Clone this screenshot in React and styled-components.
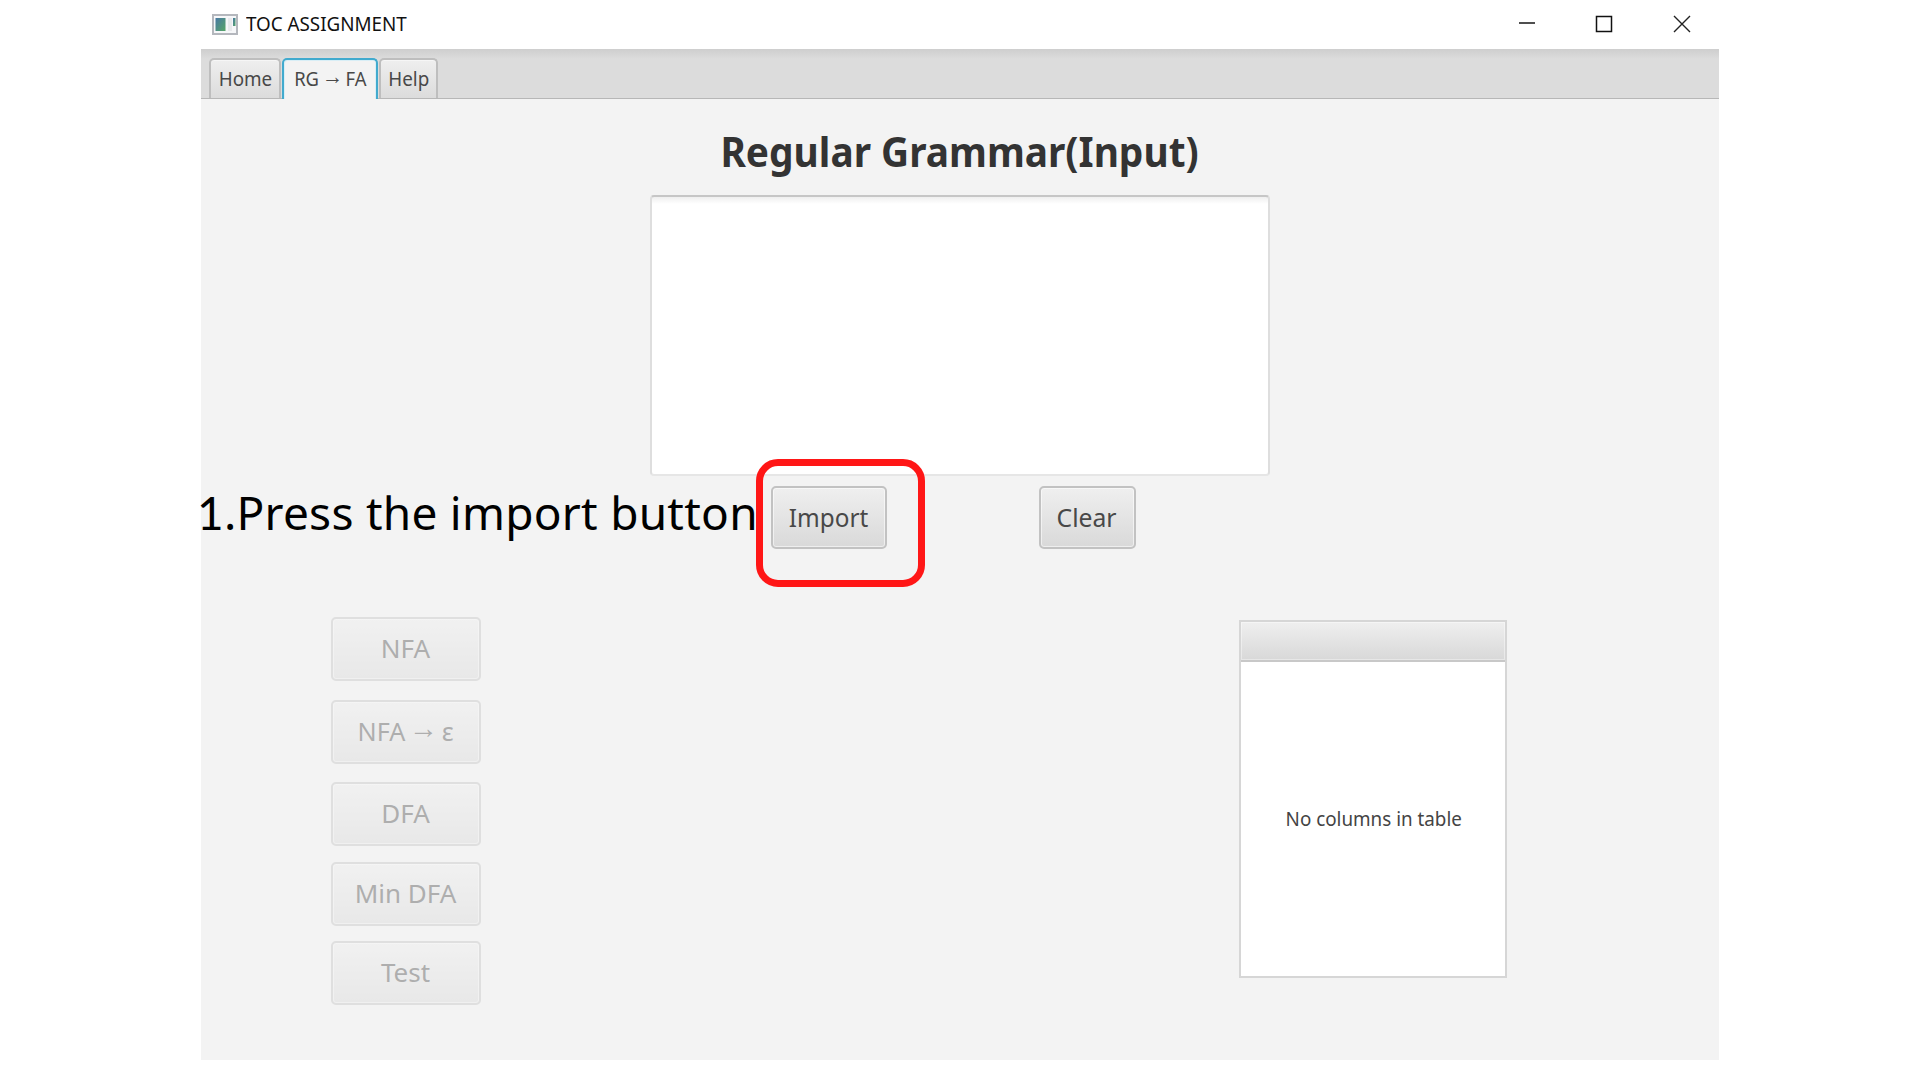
import React from 'react';
import styled, { createGlobalStyle, css } from 'styled-components';

const Global = createGlobalStyle`
  * { box-sizing: border-box; }
  body { margin: 0; background: #fff; font-family: "Noto Sans", "Open Sans", sans-serif; color: #333; overflow: hidden; }
`;

const Page = styled.div`
  width: 1920px;
  height: 1080px;
  display: flex;
  justify-content: center;
  background: #fff;
`;

const Window = styled.main`
  position: relative;
  width: 1518px;
  height: 1060px;
  display: flex;
  flex-direction: column;
  background: #f3f3f3;
`;

const Label = styled.span`
  display: inline-block;
  white-space: nowrap;
  transform: scaleX(${(p) => p.$narrow || 1});
  transform-origin: ${(p) => p.$origin || 'center'};
`;

const Arrow = styled.span`
  position: relative;
  top: -0.08em;
  margin: 0 -0.1em;
  font-family: "Liberation Sans", sans-serif;
  font-size: 1.15em;
  line-height: 0;
`;

const TitleBar = styled.header`
  height: 49px;
  display: flex;
  align-items: center;
  padding: 0 28px 1px 11px;
  background: #fff;
`;

const Title = styled.div`
  margin-left: 8px;
  flex: 1;
  color: #111;
  font-size: 20px;
  line-height: 28px;
`;

const Controls = styled.div`
  display: flex;
  gap: 60px;
`;

const TabBar = styled.nav`
  height: 50px;
  display: flex;
  align-items: flex-end;
  gap: 1px;
  padding-left: 8px;
  border-bottom: 1px solid #b7b7b7;
  background: linear-gradient(#cecece, #dcdcdc 10px);
`;

const Tab = styled.div`
  width: ${(p) => p.$w}px;
  height: 40px;
  display: flex;
  align-items: center;
  justify-content: center;
  border: 2px solid #bebebe;
  border-bottom: 0;
  border-radius: 5px 5px 0 0;
  background: linear-gradient(#efefef, #dcdcdc);
  box-shadow: inset 0 1px #f6f6f6;
  font-size: 20px;
  line-height: 28px;
  color: #484848;
  ${(p) => p.$active && css`
    height: 41px;
    margin-bottom: -1px;
    padding-bottom: 1px;
    border-color: #41aace;
    background: #f3f3f3;
    box-shadow: inset 1px 1px #d8eef6, inset -1px 0 #d8eef6;
  `}
`;

const InputArea = styled.section`
  height: 517px;
  display: flex;
  flex-direction: column;
  align-items: center;
`;

const Heading = styled.h1`
  margin: 24px 0 0;
  height: 72px;
  font-size: 41px;
  line-height: 56px;
  font-weight: 700;
  color: #333;
`;

const Grammar = styled.div`
  width: 620px;
  height: 281px;
  border: 2px solid #dedede;
  border-top-color: #c6c6c6;
  border-bottom-color: #e6e6e6;
  border-radius: 4px;
  background: linear-gradient(#efefef, #fff 7px);
`;

const Actions = styled.div`
  width: 100%;
  display: flex;
  gap: 152px;
  padding: 10px 0 0 570px;
`;

const Button = styled.button`
  width: ${(p) => p.$w}px;
  height: ${(p) => p.$h || 63}px;
  padding: 0 1px 2px 0;
  border: 2px solid #c2c2c2;
  border-radius: 5px;
  background: linear-gradient(#efefef, #d9d9d9);
  box-shadow: inset 0 0 0 1px rgba(255, 255, 255, 0.55);
  font-family: "Noto Sans", "Open Sans", sans-serif;
  font-size: 26px;
  line-height: 36px;
  color: #484848;
  &:disabled {
    padding-bottom: 3px;
    opacity: 0.4;
  }
`;

const Workspace = styled.section`
  flex: 1;
  display: flex;
  align-items: flex-start;
  justify-content: space-between;
  padding: 0 212px 0 130px;
`;

const Stages = styled.div`
  display: grid;
  grid-template-rows: 83px 82px 80px 79px 64px;
  padding-top: 1px;
`;

const Table = styled.div`
  width: 268px;
  height: 358px;
  margin-top: 4px;
  display: flex;
  flex-direction: column;
  border: 2px solid #d6d6d6;
  background: #fff;
`;

const TableHead = styled.div`
  height: 40px;
  border-bottom: 2px solid #c8c8c8;
  background: linear-gradient(#efefef, #d8d8d8);
  box-shadow: inset 0 0 0 1px rgba(255, 255, 255, 0.4);
`;

const Empty = styled.div`
  flex: 1;
  display: flex;
  align-items: center;
  justify-content: center;
  padding: 0 0 1px 1px;
  font-size: 20px;
  color: #444;
`;

const Callout = styled.div`
  position: absolute;
  left: -4px;
  top: 480px;
  color: #000;
  font-size: 46px;
  line-height: 64px;
  white-space: nowrap;
  letter-spacing: 0.25px;
`;

const Numeral = styled.span`
  font-family: Lato, sans-serif;
  line-height: 1;
`;

const Ring = styled.div`
  position: absolute;
  left: 555px;
  top: 459px;
  width: 169px;
  height: 128px;
  border: 7px solid #ff1616;
  border-radius: 22px;
`;

const AppIcon = () => (
  <svg width="26" height="21" viewBox="0 0 26 21">
    <defs>
      <linearGradient id="pane" x1="0" y1="0" x2="1" y2="1">
        <stop offset="0" stopColor="#4778a4" />
        <stop offset="1" stopColor="#57a667" />
      </linearGradient>
    </defs>
    <rect x="1" y="1" width="24" height="19" fill="#f6f7f9" stroke="#b4b7bd" strokeWidth="2" />
    <rect x="3.5" y="4" width="10" height="13" fill="url(#pane)" />
    <rect x="16" y="4" width="4" height="13" fill="#e8e9ec" />
    <rect x="21" y="4" width="2.5" height="8" fill="url(#pane)" />
  </svg>
);

const stages = [
  { id: 'nfa', label: 'NFA' },
  { id: 'epsilon', label: <>NFA <Arrow>→</Arrow> ε</>, narrow: 0.97 },
  { id: 'dfa', label: 'DFA' },
  { id: 'min', label: 'Min DFA' },
  { id: 'test', label: 'Test' },
];

export default function App() {
  return (
    <Page>
      <Global />
      <Window>
        <TitleBar>
          <AppIcon />
          <Title><Label $narrow={0.94} $origin="left">TOC ASSIGNMENT</Label></Title>
          <Controls>
            <svg width="18" height="18" viewBox="0 0 18 18"><path d="M2 8H18" stroke="#222" strokeWidth="1.6" /></svg>
            <svg width="18" height="18" viewBox="0 0 18 18"><rect x="1.5" y="1.5" width="15" height="15" fill="none" stroke="#111" strokeWidth="1.5" /></svg>
            <svg width="18" height="18" viewBox="0 0 18 18"><path d="M1 1L17 17M17 1L1 17" stroke="#222" strokeWidth="1.4" /></svg>
          </Controls>
        </TitleBar>
        <TabBar>
          <Tab $w={72}><Label $narrow={0.94}>Home</Label></Tab>
          <Tab $w={96} $active><Label $narrow={0.92}>RG <Arrow>→</Arrow> FA</Label></Tab>
          <Tab $w={59}><Label $narrow={0.94}>Help</Label></Tab>
        </TabBar>
        <InputArea>
          <Heading><Label $narrow={0.947}>Regular Grammar(Input)</Label></Heading>
          <Grammar />
          <Actions>
            <Button $w={116}><Label $narrow={0.935}>Import</Label></Button>
            <Button $w={97}><Label $narrow={0.95}>Clear</Label></Button>
          </Actions>
        </InputArea>
        <Workspace>
          <Stages>
            {stages.map(({ id, label, narrow }) => (
              <Button key={id} $w={150} $h={64} disabled><Label $narrow={narrow}>{label}</Label></Button>
            ))}
          </Stages>
          <Table>
            <TableHead />
            <Empty><Label $narrow={0.94}>No columns in table</Label></Empty>
          </Table>
        </Workspace>
        <Callout><Numeral>1</Numeral>.Press the import button</Callout>
        <Ring />
      </Window>
    </Page>
  );
}
